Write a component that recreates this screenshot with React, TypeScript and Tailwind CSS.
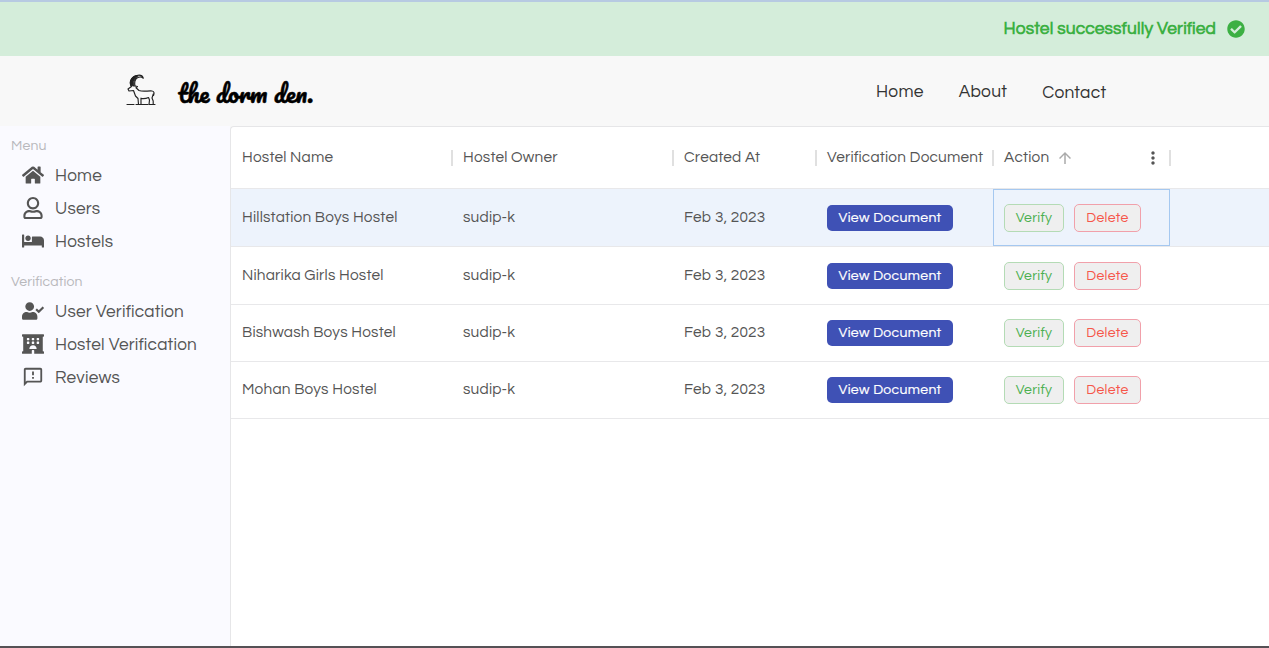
import React from "react";
import { FaHome, FaRegUser, FaBed, FaUserCheck, FaHotel, FaCheckCircle } from "react-icons/fa";
import { MdOutlineFeedback, MdArrowUpward, MdMoreVert } from "react-icons/md";

const rows = [
  { name: "Hillstation Boys Hostel", height: "h-[58px]" },
  { name: "Niharika Girls Hostel", height: "h-[58px]" },
  { name: "Bishwash Boys Hostel", height: "h-[57px]" },
  { name: "Mohan Boys Hostel", height: "h-[57px]" },
];

function Goat() {
  return (
    <svg viewBox="0 0 30 34" className="h-[34px] w-[30px]" fill="none" stroke="#222" strokeWidth="1.15" strokeLinecap="round" strokeLinejoin="round">
      <path d="M5 12C3 7 6 2 12 1.2C15 .8 16.8 2.5 17.3 4.2C15.5 2.8 13.5 2.8 12 3.4C9 4.8 8.2 8 9 12" />
      <path d="M5 11.5C3 7 6 2 12 1.6C8.5 4.5 6.8 7 8 12Z" fill="#222" />
      <path d="M9 12L11.5 12.5L10 13.8L13 16.5C17 18 22 16.6 26 17C28.5 17.3 28.3 19.5 27.5 21.5M5.5 12.5L2 15L3 17L7.5 16.5L9.5 22L12 24.5L12.5 30.5M15 24V30.5M15 24.5C18 25 20.5 24.5 22.5 23.5L23.5 26L23 30.5M27.3 20L26 24L27.2 27V30.5M12.5 30.5H15M23 30.5H27.2" />
      <path d="M1 30.5H8M10 30.5H22M24 30.5H29" />
    </svg>
  );
}

function SideItem({ icon, label }: { icon: React.ReactNode; label: string }) {
  return (
    <li className="flex h-[33px] items-center">
      <span className="flex w-[22px] justify-center">{icon}</span>
      <span className="ml-[11px] whitespace-nowrap pt-0.5 text-[17.2px] leading-5 tracking-[0.22px]">{label}</span>
    </li>
  );
}

function Divider() {
  return <span className="h-4 w-[2px] shrink-0 bg-[#e0e0e0]" />;
}

export default function App() {
  return (
    <div className="flex h-[648px] w-[1269px] flex-col overflow-hidden border-t-2 border-b-2 border-t-[#b7cae2] border-b-[#555155] bg-white font-['Questrial',Lato,sans-serif] text-[#555]">
      <div className="flex h-[54px] shrink-0 items-center justify-end bg-[#d4edda] pr-6 text-[#3cb043]">
        <span className="text-[17.4px] font-bold tracking-[0.12px]">Hostel successfully Verified</span>
        <FaCheckCircle className="ml-[11px] size-[18px]" />
      </div>
      <header className="flex h-[70px] shrink-0 items-center bg-[#f8f8f8] pl-[126px]">
        <Goat />
        <span className="ml-[22px] w-[640px] pt-1 font-['Pacifico',Lato,cursive] text-[24px] text-black [-webkit-text-stroke:0.5px_black]">the dorm den.</span>
        <nav className="ml-[58px] flex gap-[35px] text-[17.4px] tracking-[0.25px] text-[#333]">
          <a className="pt-[3px]">Home</a>
          <a className="pt-[3px]">About</a>
          <a className="pt-1">Contact</a>
        </nav>
      </header>
      <div className="flex min-h-0 flex-1">
        <aside className="w-[230px] shrink-0 bg-[#fafaff] pl-[11px] pt-[10px]">
          <h2 className="h-[22px] text-sm leading-5 tracking-[0.2px] text-[#b8b8bc]">Menu</h2>
          <ul className="pl-[11px]">
            <SideItem icon={<FaHome className="size-[22px]" />} label="Home" />
            <SideItem icon={<FaRegUser className="size-[22px]" />} label="Users" />
            <SideItem icon={<FaBed className="size-[22px]" />} label="Hostels" />
          </ul>
          <h2 className="mt-[15px] h-[22px] text-sm leading-5 tracking-[0.15px] text-[#b8b8bc]">Verification</h2>
          <ul className="pl-[11px]">
            <SideItem icon={<FaUserCheck className="size-[22px]" />} label="User Verification" />
            <SideItem icon={<FaHotel className="size-[22px]" />} label="Hostel Verification" />
            <SideItem icon={<MdOutlineFeedback className="size-[22px]" />} label="Reviews" />
          </ul>
        </aside>
        <div className="min-w-0 flex-1 bg-[#f8f8f8]">
          <main className="h-full rounded-tl-[4px] border-l border-t border-[#e6e6e8] bg-white text-[15.4px] tracking-[0.2px]">
            <div className="flex h-[62px] items-center border-b border-[#e8e8ea] pl-[11px]">
              <span className="w-[209px]">Hostel Name</span>
              <Divider />
              <span className="ml-[10px] w-[209px]">Hostel Owner</span>
              <Divider />
              <span className="ml-[10px] w-[131px]">Created At</span>
              <Divider />
              <span className="ml-[10px] w-[165px] whitespace-nowrap">Verification Document</span>
              <Divider />
              <span className="ml-[10px] w-[52px]">Action</span>
              <MdArrowUpward className="size-[18px] text-[#aaa]" />
              <MdMoreVert className="ml-[69px] size-5" />
              <span className="ml-[6px] flex"><Divider /></span>
            </div>
            {rows.map((row, index) => (
              <div key={row.name} className={"flex border-b border-[#e8e8ea] " + row.height + (index === 0 ? " bg-[#edf3fc]" : "")}>
                <span className="flex w-[232px] items-center pl-[11px]">{row.name}</span>
                <span className="flex w-[221px] items-center">sudip-k</span>
                <span className="flex w-[143px] items-center">Feb 3, 2023</span>
                <span className="flex w-[166px] items-center">
                  <button className="h-[26px] w-[126px] rounded-[5px] bg-[#3f51b5] pt-px text-[14px] tracking-[0.35px] text-white [-webkit-text-stroke:0.2px_white]">View Document</button>
                </span>
                <span className={"flex w-[177px] items-center gap-[10px] border pl-[10px] " + (index === 0 ? "border-[#a5c8f0]" : "border-transparent")}>
                  <button className="h-7 w-[60px] rounded-[5px] border border-[#b4dbb5] bg-[#efefef] pt-px text-[14px] tracking-[0.3px] text-[#4caf50]">Verify</button>
                  <button className="h-7 w-[67px] rounded-[5px] border border-[#f1a0aa] bg-[#efefef] pt-px text-[14px] tracking-[0.3px] text-[#f6564a]">Delete</button>
                </span>
              </div>
            ))}
          </main>
        </div>
      </div>
    </div>
  );
}
